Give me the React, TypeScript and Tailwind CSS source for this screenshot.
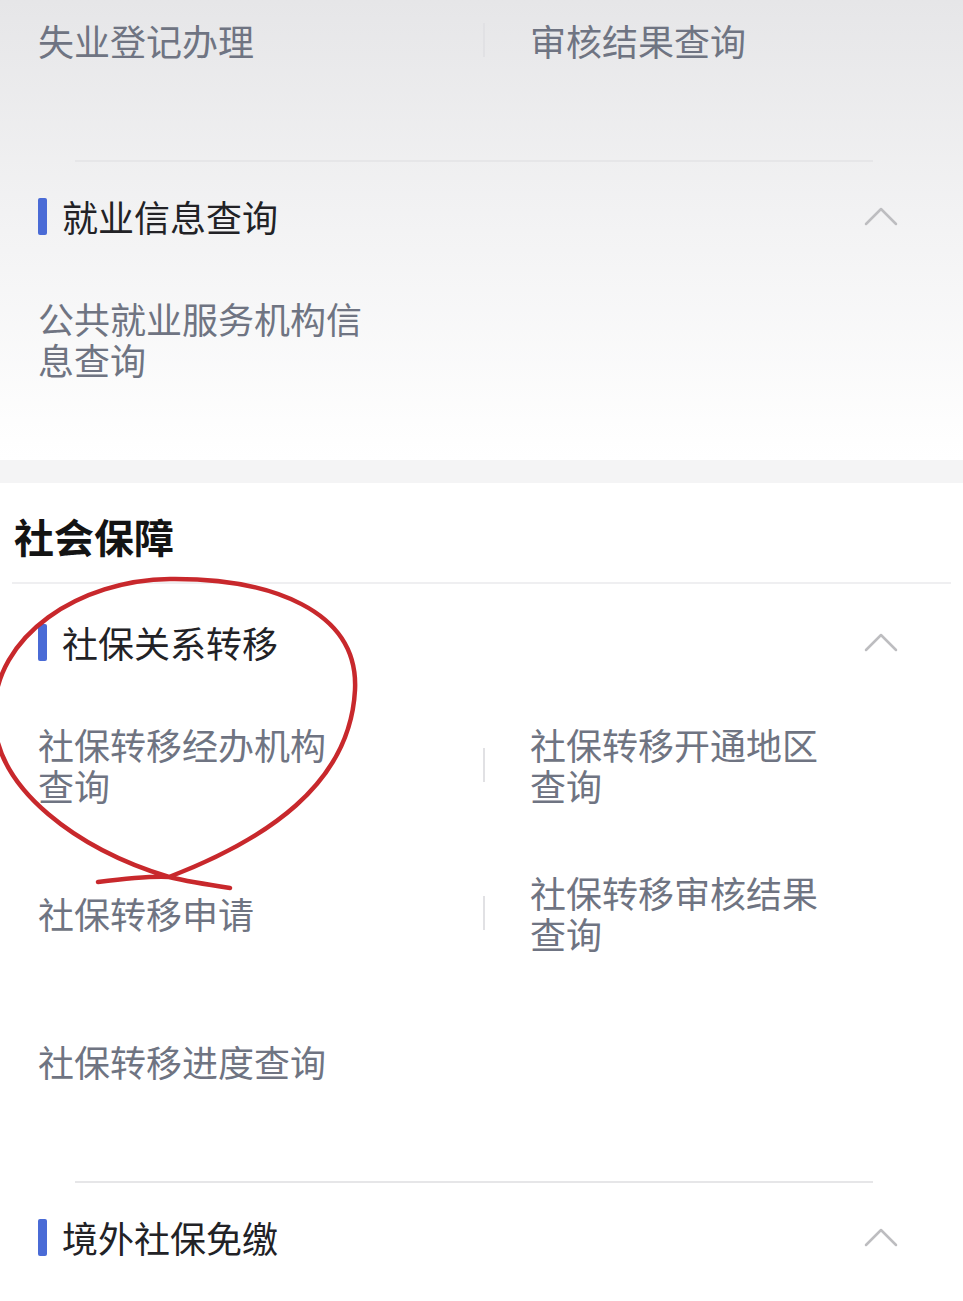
import React from "react";

const FONT = "font-['Noto_Sans_CJK_SC','Noto_Sans',sans-serif]";

function Chevron() {
  return (
    <svg width="34" height="20" viewBox="0 0 34 20" fill="none">
      <polyline points="2,18 17,3 32,18" stroke="#bdbdc0" strokeWidth="2.5" strokeLinecap="round" strokeLinejoin="round" />
    </svg>
  );
}

function GroupHeader({ title, pt }: { title: string; pt: string }) {
  return (
    <div className={`${pt} flex items-center justify-between pl-[38px] pr-[65px]`}>
      <div className="flex items-center h-[40px]">
        <div className="w-[9px] h-[37px] bg-[#4a6bd6] rounded-[2px] mr-[15px]" />
        <span className="text-[36px] leading-[40px] text-[#222226]">{title}</span>
      </div>
      <Chevron />
    </div>
  );
}

function Item({ lines }: { lines: string[] }) {
  return (
    <div className="text-[36px] leading-[41px] text-[#6f7482]">
      {lines.map((l, i) => (
        <div key={i}>{l}</div>
      ))}
    </div>
  );
}

function Row({ left, right, h = "h-[148px]" }: { left: string[]; right?: string[]; h?: string }) {
  return (
    <div className={`${h} flex items-center px-[38px]`}>
      <div className="w-[445px]">
        <Item lines={left} />
      </div>
      {right ? (
        <>
          <div className="w-[2px] h-[34px] bg-[#e1e1e4]" />
          <div className="pl-[45px]">
            <Item lines={right} />
          </div>
        </>
      ) : null}
    </div>
  );
}

function ShortDivider() {
  return <div className="ml-[75px] mr-[90px] h-[2px] bg-[#e6e6e8]" />;
}

export default function App() {
  return (
    <div className={`relative w-[963px] h-[1301px] overflow-hidden bg-white ${FONT}`}>
      {/* top section */}
      <div className="h-[460px] bg-gradient-to-b from-[#e6e6e8] via-[#f3f3f4] to-white">
        <Row left={["失业登记办理"]} right={["审核结果查询"]} h="h-[80px]" />
        <div className="h-[80px]" />
        <ShortDivider />
        <GroupHeader title="就业信息查询" pt="pt-[34px]" />
        <div className="mt-[29px]">
          <Row left={["公共就业服务机构信", "息查询"]} />
        </div>
      </div>
      <div className="h-[23px] bg-[#f4f4f5]" />

      {/* social security */}
      <div className="pt-[31px] px-[14px]">
        <div className="text-[40px] leading-[44px] font-bold text-[#141414]">社会保障</div>
      </div>
      <div className="mt-[24px] mx-[12px] h-[2px] bg-[#efeff1]" />
      <GroupHeader title="社保关系转移" pt="pt-[38px]" />
      <div className="mt-[29px]">
        <Row left={["社保转移经办机构", "查询"]} right={["社保转移开通地区", "查询"]} />
        <Row left={["社保转移申请"]} right={["社保转移审核结果", "查询"]} />
        <Row left={["社保转移进度查询"]} />
      </div>
      <div className="mt-[46px]">
        <ShortDivider />
      </div>
      <GroupHeader title="境外社保免缴" pt="pt-[34px]" />

      {/* red hand-drawn annotation */}
      <svg className="absolute left-0 top-0 pointer-events-none" width="963" height="1301" viewBox="0 0 963 1301" fill="none">
        <path
          d="M 98 882 C 130 878 150 876 169 877 C 265 840 350 785 355 690 C 359 610 270 578 170 579 C 80 580 -6 635 -6 715 C -6 790 80 850 169 877 C 190 882 210 885 230 888"
          stroke="#c8282c"
          strokeWidth="4.5"
          strokeLinecap="round"
          strokeLinejoin="round"
        />
      </svg>
    </div>
  );
}
